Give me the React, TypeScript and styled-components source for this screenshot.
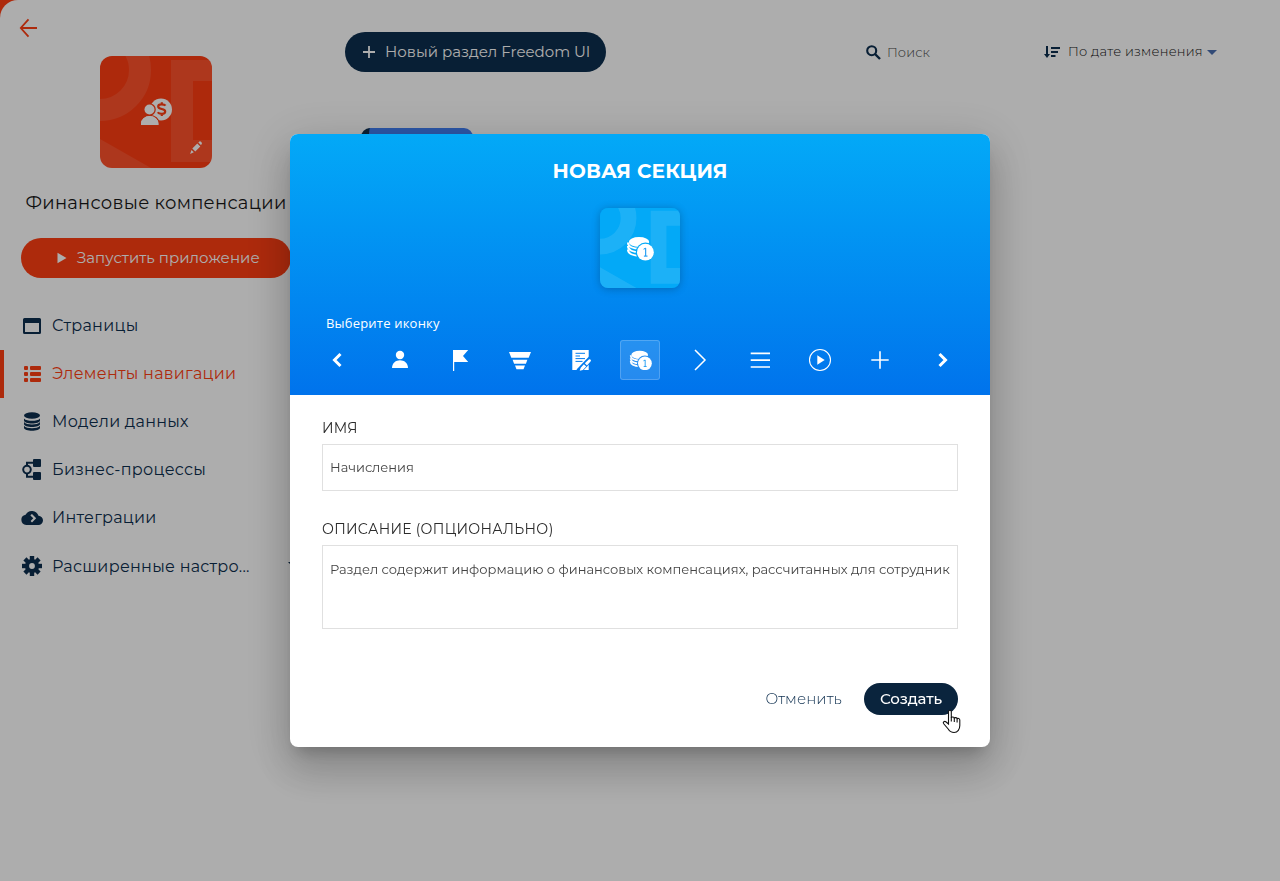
import React from 'react';
import styled, { createGlobalStyle, css } from 'styled-components';

const navy = '#0d2e4e';
const red = '#ff3e13';

const GlobalStyle = createGlobalStyle`
  *, *::before, *::after { box-sizing: border-box; }
  body { margin: 0; font-family: Montserrat, Inter, 'Open Sans', sans-serif; overflow: hidden; }
  svg { display: block; flex: none; }
`;

const Backdrop = styled.div`
  height: 881px;
  background: ${red};
`;

const Shell = styled.div`
  display: grid;
  grid-template-columns: 312px 1fr;
  height: 100%;
  background: #fff;
  border-top-left-radius: 18px;
`;

const Sidebar = styled.aside`
  display: flex;
  flex-direction: column;
  padding-top: 18px;
`;

const BackLink = styled.a`
  width: 20px;
  height: 20px;
  margin-left: 18px;
`;

const AppTile = styled.div`
  align-self: center;
  width: 112px;
  height: 112px;
  margin-top: 18px;
  border-radius: 12px;
  overflow: hidden;
`;

const AppName = styled.h1`
  margin: 23px 0 0;
  font-size: 18px;
  font-weight: 400;
  line-height: 24px;
  letter-spacing: 0.28px;
  text-align: center;
  white-space: nowrap;
  color: #181818;
`;

const RunButton = styled.button`
  display: flex;
  align-items: center;
  align-self: center;
  width: 270px;
  height: 40px;
  margin-top: 23px;
  padding: 0 0 1px 36px;
  gap: 10px;
  border: 0;
  border-radius: 20px;
  background: ${red};
  color: #fff;
  font: inherit;
  font-size: 15px;
  letter-spacing: 0.03px;
  white-space: nowrap;
`;

const Menu = styled.nav`
  display: flex;
  flex-direction: column;
  margin-top: 24px;
`;

const MenuItem = styled.a<{ $active?: boolean }>`
  display: flex;
  align-items: center;
  height: 48px;
  gap: 8px;
  padding: 0 14px 0 16px;
  border-left: 4px solid ${p => (p.$active ? red : 'transparent')};
  color: ${p => (p.$active ? red : navy)};
  font-size: 16px;
  letter-spacing: 0.27px;
  white-space: nowrap;

  span { margin-top: -2px; }
  &:last-child span { margin-top: 0; }
  svg + span + svg { margin: -3px 0 0 auto; }
`;

const Main = styled.main`
  padding: 32px 0 0 33px;
`;

const Toolbar = styled.div`
  display: flex;
  align-items: center;
  height: 40px;
  color: ${navy};
`;

const AddButton = styled.button`
  display: flex;
  align-items: center;
  width: 261px;
  height: 40px;
  padding: 0 0 1px 18px;
  gap: 10px;
  border: 0;
  border-radius: 20px;
  background: ${navy};
  color: #fff;
  font: inherit;
  font-size: 15px;
  white-space: nowrap;
`;

const toolText = css`
  font-size: 13px;
  font-weight: 300;
  white-space: nowrap;
`;

const Search = styled.div`
  display: flex;
  align-items: center;
  gap: 6px;
  width: 178px;
  margin-left: 260px;
  ${toolText}
  letter-spacing: 0.1px;
  color: #444;
`;

const Sort = styled.div`
  display: flex;
  align-items: center;
  gap: 8px;
  ${toolText}
  letter-spacing: 0.24px;
  color: #111;

  span { margin-top: -2px; }
  svg:last-child { margin-left: -4px; }
`;

const SectionCard = styled.div`
  width: 112px;
  height: 112px;
  margin: 56px 0 0 16px;
  border-radius: 9px;
  border-left: 8px solid ${navy};
  background: #417ef5;
`;

const Overlay = styled.div`
  position: fixed;
  inset: 0;
  display: flex;
  align-items: center;
  justify-content: center;
  background: rgba(0, 0, 0, 0.32);
`;

const Dialog = styled.div`
  width: 700px;
  height: 613px;
  display: flex;
  flex-direction: column;
  border-radius: 8px;
  background: #fff;
  box-shadow: 0 11px 15px -7px rgba(0, 0, 0, 0.2), 0 24px 38px 3px rgba(0, 0, 0, 0.14),
    0 9px 46px 8px rgba(0, 0, 0, 0.12);
`;

const DialogHeader = styled.header`
  display: flex;
  flex-direction: column;
  align-items: center;
  height: 261px;
  padding: 23px 26px 0;
  border-radius: 8px 8px 0 0;
  background: linear-gradient(#03a9f7, #0073ec);
  color: #fff;
`;

const DialogTitle = styled.h2`
  margin: 0;
  font-size: 20px;
  font-weight: 700;
  line-height: 28px;
  letter-spacing: 0.12px;
`;

const SectionTile = styled.div`
  width: 80px;
  height: 80px;
  margin-top: 23px;
  border-radius: 8px;
  overflow: hidden;
  box-shadow: 0 1px 8px rgba(0, 0, 0, 0.24);
`;

const PickerLabel = styled.div`
  align-self: flex-start;
  margin: 25px 0 0 10px;
  font-family: 'Open Sans', sans-serif;
  font-size: 13px;
  font-weight: 500;
  line-height: 20px;
  letter-spacing: 0.2px;
`;

const Picker = styled.div`
  align-self: stretch;
  display: flex;
  justify-content: space-between;
  margin-top: 7px;
`;

const PickerArrow = styled.div`
  display: grid;
  place-items: center;
  width: 42px;
  height: 40px;
`;

const PickerList = styled.div`
  display: flex;
  gap: 20px;
`;

const PickerItem = styled.div<{ $selected?: boolean }>`
  display: grid;
  place-items: center;
  width: 40px;
  height: 40px;
  border: 1px solid ${p => (p.$selected ? 'rgba(255,255,255,0.2)' : 'transparent')};
  border-radius: 3px;
  background: ${p => (p.$selected ? 'rgba(255,255,255,0.15)' : 'none')};
`;

const DialogBody = styled.div`
  flex: 1;
  display: flex;
  flex-direction: column;
  padding: 23px 32px 32px;
`;

const FieldLabel = styled.div`
  font-size: 14px;
  line-height: 20px;
  font-weight: 400;
  letter-spacing: 0.29px;
  color: #2b2b2b;
`;

const Field = styled.div<{ $height: number; $top: number }>`
  height: ${p => p.$height}px;
  margin: 6px 0 28px;
  padding: ${p => p.$top}px 7px;
  border: 1px solid #e0e0e0;
  font-size: 13px;
  font-weight: 400;
  line-height: 20px;
  color: #444;
  white-space: nowrap;
  overflow: hidden;
`;

const Actions = styled.footer`
  display: flex;
  justify-content: flex-end;
  align-items: center;
  gap: 22px;
  margin-top: auto;
`;

const CancelButton = styled.button`
  height: 32px;
  padding: 0 0 1px;
  border: 0;
  background: none;
  color: ${navy};
  font: inherit;
  font-size: 15px;
  font-weight: 300;
  letter-spacing: 0.1px;
`;

const CreateButton = styled.button`
  position: relative;
  width: 94px;
  height: 32px;
  padding: 0 0 1px;
  border: 0;
  border-radius: 16px;
  background: #0a243d;
  color: #fff;
  font: inherit;
  font-size: 15px;
  font-weight: 500;
  letter-spacing: -0.12px;
`;

const Pointer = styled.svg`
  position: absolute;
  left: 77.5px;
  top: 26px;
`;

const TileArt = ({ color, children }: { color: string; children?: React.ReactNode }) => (
  <svg width="100%" height="100%" viewBox="0 0 112 112">
    <rect width="112" height="112" fill={color} />
    <g fill="#fff" opacity="0.1">
      <circle cx="0" cy="14" r="40" fill="none" stroke="#fff" strokeWidth="22" />
      <path d="M71 4H112V25H93V84H112V106H71Z" />
      <path d="M0 83L51 112H0Z" />
    </g>
    {children}
  </svg>
);

const Coins = ({ id, ...rest }: { id: string } & React.SVGProps<SVGSVGElement>) => (
  <svg viewBox="0 0 28 25" {...rest}>
    <mask id={id}>
      <rect width="28" height="25" fill="#fff" />
      <circle cx="19.4" cy="16.2" r="9.6" fill="#000" />
    </mask>
    <g mask={`url(#${id})`}>
      <ellipse cx="13" cy="6" rx="10.2" ry="5" fill="#fff" />
      <g fill="none" stroke="#fff" strokeWidth="2.1">
        <path d="M2 6.5C2 10.5 7 12.8 14 12.8" />
        <path d="M2 10C2 14 7 16.3 14 16.3" />
        <path d="M2 13.5C2 17.5 7 19.8 14 19.8" />
      </g>
    </g>
    <circle cx="19.4" cy="16.2" r="8.4" fill="#fff" />
    <path d="M17.6 13.2L19.7 12.2V19.9M17.9 20.1H21.5" fill="none" stroke="#048ff0" strokeWidth="1" />
  </svg>
);

const icon24 = { width: 24, height: 24, viewBox: '0 0 24 24', fill: 'currentColor' };

const menu = [
  {
    label: 'Страницы',
    icon: <svg {...icon24}><path fillRule="evenodd" d="M4.5 4h15A1.5 1.5 0 0 1 21 5.5v13a1.5 1.5 0 0 1-1.5 1.5h-15A1.5 1.5 0 0 1 3 18.5v-13A1.5 1.5 0 0 1 4.5 4zM5 9v9h14V9z" /></svg>,
  },
  {
    label: 'Элементы навигации', active: true,
    icon: <svg {...icon24}>{[4, 10, 16].map(y => <g key={y}><rect x="4" y={y} width="4" height="4" rx="1" /><rect x="10" y={y} width="11" height="4" rx="1" /></g>)}</svg>,
  },
  {
    label: 'Модели данных',
    icon: (
      <svg {...icon24}>
        <ellipse cx="12" cy="5.5" rx="8" ry="3.3" />
        {[8.4, 12.1, 15.8].map(y => <path key={y} d={`M4 ${y}c1.5 1.8 4.5 2.4 8 2.4s6.5-.6 8-2.4v2c0 1.8-4 3-8 3s-8-1.2-8-3z`} />)}
      </svg>
    ),
  },
  {
    label: 'Бизнес-процессы',
    icon: (
      <svg {...icon24}>
        <rect x="13" y="1" width="8" height="8" rx="1" />
        <rect x="13" y="14" width="8" height="8" rx="1" />
        <path d="M7 8V4.7h6M7 15v3.7h6" fill="none" stroke="currentColor" strokeWidth="2" />
        <circle cx="7" cy="11.6" r="3.8" fill="none" stroke="currentColor" strokeWidth="2" />
      </svg>
    ),
  },
  {
    label: 'Интеграции',
    icon: (
      <svg {...icon24}>
        <path fillRule="evenodd" d="M18.5 9.8A7 7 0 0 0 5.6 8.7 5.2 5.2 0 0 0 6.2 19H18.3a4.6 4.6 0 0 0 .2-9.2zM10.6 8.9L12 8l4.2 4.3L12 16.5l-1.4-1.4 2.7-2.8-2.7-2.5z" />
      </svg>
    ),
  },
  {
    label: 'Расширенные настро...', expandable: true,
    icon: (
      <svg {...icon24}>
        <circle cx="12" cy="12" r="5" fill="none" stroke="currentColor" strokeWidth="4.2" />
        {[0, 45, 90, 135, 180, 225, 270, 315].map(a => <path key={a} transform={`rotate(${a} 12 12)`} d="M9.8 2h4.4v4H9.8z" />)}
      </svg>
    ),
  },
];

const pickerIcons = [
  <svg {...icon24}><circle cx="12" cy="7" r="4.2" /><path d="M4 20C4 15 8 12.3 12 12.3S20 15 20 20z" /></svg>,
  <svg {...icon24}><path d="M5 2H20.2L15 8L20.2 14H6.2V23H5z" /></svg>,
  <svg {...icon24}><path d="M1 4h22l-2.3 5.8H3.300zM4.6 11.7h14.800l-1.5 4H6.100zM7 17.500h10l-1.500 3.700h-7z" /></svg>,
  <svg {...icon24}>
    <mask id="sheet">
      <rect width="24" height="24" fill="#fff" />
      <path d="M7.5 5.3h9.5M7.5 8h4.5M7.5 10.6h9.5M7.5 13.4h7" stroke="#000" strokeWidth="1" />
      <path d="M10.5 23.5L23 10.5" stroke="#000" strokeWidth="5.5" />
    </mask>
    <path mask="url(#sheet)" d="M4.3 2h16.4v20H4.3z" />
    <path d="M11.7 22.8l1-3.1 3.2-3.4 2.3 2.2-3.3 3.4zM16.8 15.3l4-3.8c1.3-.9 2.8.4 1.9 1.7l-3.7 4.2z" />
  </svg>,
  <Coins id="coins-small" width="23" height="20.5" />,
  <svg {...icon24}><path d="M7 2l10 10L7 22" fill="none" stroke="currentColor" strokeWidth="1.5" /></svg>,
  <svg {...icon24}><path d="M2.7 5.3H22M2.7 12.1H22M2.7 19H22" stroke="currentColor" strokeWidth="1.7" /></svg>,
  <svg {...icon24}><circle cx="12" cy="12" r="10.5" fill="none" stroke="currentColor" strokeWidth="1.1" /><path d="M9.3 7.2L16.7 12l-7.4 4.8z" /></svg>,
  <svg {...icon24}><path d="M12 3.3v17.4M3.3 12h17.4" stroke="currentColor" strokeWidth="1.6" /></svg>,
];

export default function App() {
  return (
    <>
      <GlobalStyle />
      <Backdrop>
        <Shell>
          <Sidebar>
            <BackLink>
              <svg width="20" height="20" viewBox="0 0 20 20" fill="none" stroke={red} strokeWidth="1.8">
                <path d="M19 10H3M10.5 1.3L2.8 10l7.7 8.7" />
              </svg>
            </BackLink>
            <AppTile>
              <TileArt color={red}>
                <circle cx="61" cy="53.5" r="11" fill="#fff" />
                <path d="M65.500 49.6c-1-1.5-7.3-2.2-7.3.9 0 3.500 7 1.500 7 5 0 3.200-6.300 2.700-7.500.7M61.800 46.300v2.500M61.800 57v3" fill="none" stroke={red} strokeWidth="2.2" />
                <g fill="#fff" stroke={red} strokeWidth="2.6" paintOrder="stroke">
                  <path d="M41 69v-1.5a8.7 7.5 0 0 1 17.4 0V69z" />
                  <circle cx="49.5" cy="53.5" r="5" />
                </g>
                <path d="M41 69v-1.5a8.700 7.500 0 0 1 17.400 0V69z" fill="#fff" />
                <g fill="#fff">
                  <path d="M92.3 92.5l5-5 3 3-5 5zM98.3 86.5l1.2-1.1c1-.4 2.700 1.200 2.400 2.500l-1 1.200zM91.500 94l2.300 2.300-3.700 1.600z" />
                </g>
              </TileArt>
            </AppTile>
            <AppName>Финансовые компенсации</AppName>
            <RunButton>
              <svg width="10" height="12" viewBox="0 0 10 12" fill="#fff"><path d="M.5.8L9.500 6l-9 5.200z" /></svg>
              Запустить приложение
            </RunButton>
            <Menu>
              {menu.map(item => (
                <MenuItem key={item.label} $active={item.active}>
                  {item.icon}
                  <span>{item.label}</span>
                  {item.expandable && <svg width="10" height="5" viewBox="0 0 10 5" fill="currentColor"><path d="M0 0h10L5 5z" /></svg>}
                </MenuItem>
              ))}
            </Menu>
          </Sidebar>
          <Main>
            <Toolbar>
              <AddButton>
                <svg width="12" height="12" viewBox="0 0 12 12" stroke="#fff" strokeWidth="1.8"><path d="M6 0v12M0 6h12" /></svg>
                Новый раздел Freedom UI
              </AddButton>
              <Search>
                <svg width="15" height="15" viewBox="0 0 15 15" fill="none" stroke={navy} strokeWidth="2.1">
                  <circle cx="5.7" cy="5.7" r="4.5" /><path d="M9 9l5 5" strokeWidth="2.4" />
                </svg>
                Поиск
              </Search>
              <Sort>
                <svg width="16" height="14" viewBox="0 0 16 14" fill={navy}>
                  <path d="M2 1h2v8h2l-3 4-3-4h2zM7 2h9v2H7zM7 6h7v2H7zM7 10h4.500v2H7z" />
                </svg>
                <span>По дате изменения</span>
                <svg width="10" height="5" viewBox="0 0 10 5" fill="#4a6fb0"><path d="M0 0h10L5 5z" /></svg>
              </Sort>
            </Toolbar>
            <SectionCard />
          </Main>
        </Shell>
      </Backdrop>
      <Overlay>
        <Dialog role="dialog">
          <DialogHeader>
            <DialogTitle>НОВАЯ СЕКЦИЯ</DialogTitle>
            <SectionTile>
              <TileArt color="#03a9f7">
                <Coins id="coins-large" x="36.4" y="39.2" width="39.2" height="35" />
              </TileArt>
            </SectionTile>
            <PickerLabel>Выберите иконку</PickerLabel>
            <Picker>
              <PickerArrow>
                <svg width="12" height="16" viewBox="0 0 12 16" fill="none" stroke="#fff" strokeWidth="3"><path d="M9.5 2L3.5 8l6 6" /></svg>
              </PickerArrow>
              <PickerList>
                {pickerIcons.map((icon, i) => <PickerItem key={i} $selected={i === 4}>{icon}</PickerItem>)}
              </PickerList>
              <PickerArrow>
                <svg width="12" height="16" viewBox="0 0 12 16" fill="none" stroke="#fff" strokeWidth="3"><path d="M2.5 2l6 6-6 6" /></svg>
              </PickerArrow>
            </Picker>
          </DialogHeader>
          <DialogBody>
            <FieldLabel>ИМЯ</FieldLabel>
            <Field $height={47} $top={12}>Начисления</Field>
            <FieldLabel>ОПИСАНИЕ (ОПЦИОНАЛЬНО)</FieldLabel>
            <Field $height={84} $top={13}>
              Раздел содержит информацию о финансовых компенсациях, рассчитанных для сотрудник
            </Field>
            <Actions>
              <CancelButton>Отменить</CancelButton>
              <CreateButton>
                Создать
                <Pointer width="20" height="26" viewBox="0 0 20 26">
                  <path
                    d="M6.5 15V2.8C6.5.7 9.3.7 9.3 2.8V9c.3-1.5 3-1.2 3 .4.3-1.2 2.8-1 2.8.6.4-1 2.7-.9 2.7 1v5.5c0 3.5-2 7-5.7 7-3 0-4.5-1.2-5.900-3.500L1.500 14.500c-.8-1.500 1-2.700 2.300-1.700z"
                    fill="#fff" stroke="#111" strokeWidth="1.1"
                  />
                  <path d="M9.3 8.5v4M12.3 9v4M15.1 10v3.5" stroke="#111" strokeWidth="1.1" />
                </Pointer>
              </CreateButton>
            </Actions>
          </DialogBody>
        </Dialog>
      </Overlay>
    </>
  );
}
